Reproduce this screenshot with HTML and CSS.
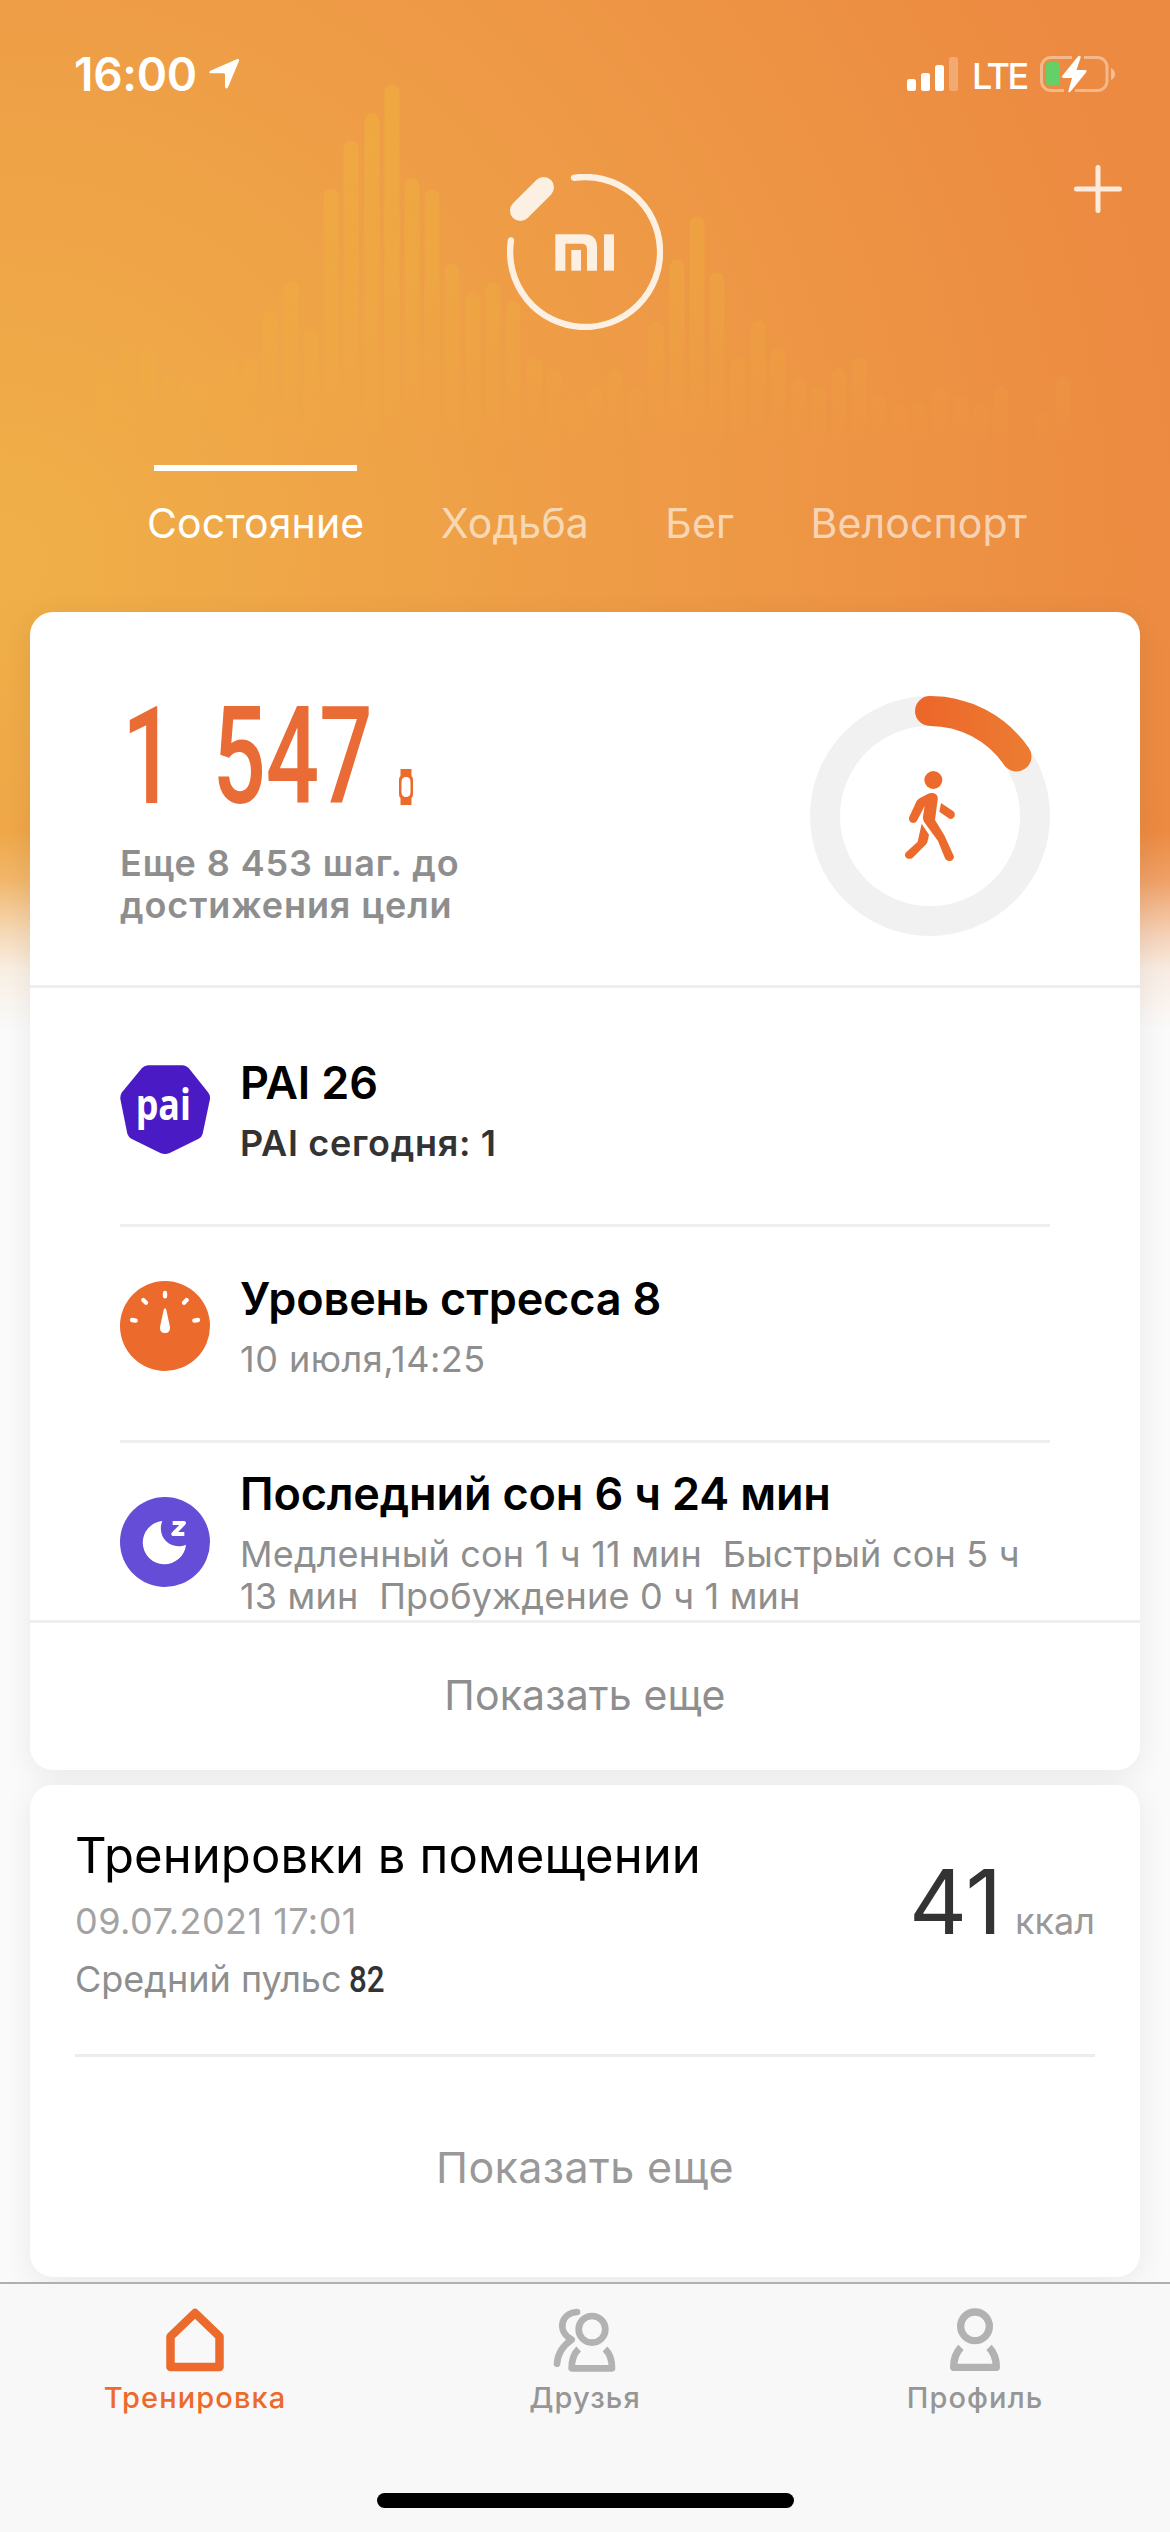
FILE: index.html
```html
<!DOCTYPE html>
<html lang="ru">
<head>
  <meta charset="UTF-8">
  <meta name="viewport" content="width=device-width, initial-scale=1.0">
  <title>Mi Fit</title>
  <link rel="stylesheet" href="styles.css">
</head>
<body>
  <div class="app">
    <header class="header">
      <svg class="wave" viewBox="0 0 1170 460">
        <defs>
          <linearGradient id="waveFill" gradientUnits="userSpaceOnUse" x1="0" y1="80" x2="0" y2="450">
            <stop offset="0" stop-color="#f0b43c" stop-opacity="0.5"/>
            <stop offset="0.5" stop-color="#f0b43c" stop-opacity="0.32"/>
            <stop offset="1" stop-color="#f0b43c" stop-opacity="0"/>
          </linearGradient>
        </defs>
        <path stroke="url(#waveFill)" d="M108 375V440M128 356V440M148 356V440M169 385V440M189 385V440M209 387V440M230 365V440M250 365V440M270 318V440M291 289V440M311 337V440M331 196V440M351 148V440M372 121V440M392 92V440M412 186V440M432 197V440M452 271V440M473 300V440M493 290V440M513 309V440M534 365V440M554 376V440M575 403V440M595 393V440M615 376V440M636 393V440M656 330V440M677 267V440M697 224V440M717 280V440M738 365V440M758 328V440M778 356V440M799 385V440M819 394V440M839 376V440M859 365V440M879 403V440M900 411V440M919 411V440M940 394V440M961 403V440M981 411V440M1001 394V440M1042 421V440M1063 384V440"/>
      </svg>

      <div class="status">
        <div class="status-left">
          <span class="time">16:00</span>
          <svg class="arrow" width="32" height="32" viewBox="0 0 96 96"><path d="M7 38 88 3q7-1 5 6L60 88q-5 7-9 0V49q0-3-4-3H8q-8-2-1-8z"/></svg>
        </div>
        <div class="status-right">
          <svg width="52" height="36" viewBox="0 0 52 36">
            <g fill="#fff">
              <rect x="0" y="23" width="9" height="12" rx="2.5"/>
              <rect x="14" y="17" width="9" height="18" rx="2.5"/>
              <rect x="28" y="9" width="9" height="26" rx="2.5"/>
              <rect x="42" y="1" width="9" height="34" rx="2.5" opacity="0.25"/>
            </g>
          </svg>
          <span class="lte">LTE</span>
          <svg width="76" height="38" viewBox="0 0 76 38">
            <path class="bat" d="M32 2.500H11a9.500 9.500 0 0 0-9.500 9.500v14a9.500 9.500 0 0 0 9.500 9.500H24M44 2.500H57.500a9.500 9.500 0 0 1 9.500 9.500v14a9.500 9.500 0 0 1-9.500 9.500H35"/>
            <path fill="#fff" opacity="0.45" d="M71 13q4 2 4 6t-4 6z"/>
            <rect x="6" y="7" width="14" height="24" rx="4" fill="#65cf68"/>
            <path fill="#fff" d="M38 1.500q3-2 2.500 1.500L36.500 15h8.500q2.500 0 1 2.500L31 36q-3 3-2.500-.5L32 23h-8q-3 0-1.500-2.500z"/>
          </svg>
        </div>
      </div>

      <div class="hero">
        <svg class="logo" viewBox="0 0 468 468">
          <g fill="none" stroke="#fcf0e2" stroke-linecap="round">
            <path stroke-width="19" d="M201 11.500A225 225 0 1 1 12 199"/>
            <path stroke-width="62" d="M110 40 40 110"/>
          </g>
          <g fill="#fcf0e2">
            <path d="M145 181h86q39 0 39 39v70h-30v-65q0-16-16-16h-49v81h-30z"/>
            <rect x="193" y="228" width="29" height="62"/>
            <rect x="291" y="181" width="30" height="109"/>
          </g>
        </svg>
        <svg class="plus" viewBox="0 0 48 48"><path d="M24 2.500v43M2.500 24h43"/></svg>
      </div>

      <nav class="tabs">
        <a class="tab active">Состояние</a>
        <a class="tab">Ходьба</a>
        <a class="tab">Бег</a>
        <a class="tab">Велоспорт</a>
      </nav>
    </header>

    <main>
      <section class="card">
        <div class="steps">
          <div>
            <div class="count">
              <span class="number">1 547</span>
              <svg class="watch" width="14" height="36" viewBox="0 0 14 36">
                <path fill="#ec6a2b" fill-rule="evenodd" d="M1.500 0h11v7q1.500 1 1.500 4v14q0 3-1.500 4v7h-11v-7Q0 28 0 25V11q0-3 1.500-4zM7 8Q2.500 8 2.500 13v10q0 5 4.500 5t4.500-5V13Q11.500 8 7 8z"/>
              </svg>
            </div>
            <p class="goal">Еще 8 453 шаг. до<br>достижения цели</p>
          </div>
          <svg class="ring" viewBox="0 0 240 240">
            <defs>
              <linearGradient id="ringFill">
                <stop offset="0" stop-color="#ec682a"/>
                <stop offset="1" stop-color="#ec7a31"/>
              </linearGradient>
            </defs>
            <circle cx="120" cy="120" r="105" fill="none" stroke="#f1f1f1" stroke-width="30"/>
            <path d="M120 15A105 105 0 0 1 206.500 60.500" fill="none" stroke="url(#ringFill)" stroke-width="30" stroke-linecap="round"/>
            <g fill="#ec6a2b" transform="translate(-30 -26) scale(0.33333)">
              <circle cx="460" cy="330" r="27"/>
              <path d="M455 369c12 0 20 8 18 20l-8 61 28 46 28 61c5 14-18 24-26 8l-21-52-42-58q-4-7-3-15l5-32-23 44c-9 14-29 4-23-12l22-47q3-5 10-9l23-12q5-3 12-3z"/>
              <path d="M483 399l37 25c12 11-2 29-14 21l-28-20z"/>
              <path d="M425 461l22 33-4 19q-1 6-6 11l-39 39c-12 10-29-3-21-15l36-33z"/>
            </g>
          </svg>
        </div>

        <div class="list">
          <div class="row">
            <svg class="icon" viewBox="0 0 270 270">
              <path fill="#4a1ac4" d="M85 1H188q10 0 18 8l58 73q7 9 6 20l-22 104q-2 9-12 15l-87 43q-14 6-28 0l-87-43q-9-6-12-15L1 102q-1-11 5-20L66 9q8-8 19-8z"/>
              <text class="pai" x="47" y="164" textLength="166" lengthAdjust="spacingAndGlyphs">pai</text>
            </svg>
            <div>
              <h2 class="row-title">PAI 26</h2>
              <p class="row-text dark">PAI сегодня: 1</p>
            </div>
          </div>
          <div class="row">
            <svg class="icon" viewBox="0 0 270 270">
              <circle cx="135" cy="135" r="135" fill="#ec6a2b"/>
              <g stroke="#fff" stroke-width="13" stroke-linecap="round">
                <path d="M135 36v10M70 57l8 8M200 57l-8 8M36 117l11 2M234 117l-11 2"/>
              </g>
              <path fill="#fff" d="M135 82q3 0 4 5l11 51q1 18-15 18t-15-18l11-51q1-5 4-5z"/>
            </svg>
            <div>
              <h2 class="row-title">Уровень стресса 8</h2>
              <p class="row-text wide">10 июля,14:25</p>
            </div>
          </div>
          <div class="row">
            <svg class="icon" viewBox="0 0 270 270">
              <circle cx="135" cy="135" r="135" fill="#664dd8"/>
              <path fill="#fff" d="M127 72A65 65 0 1 0 198 143C152 162 108 120 127 72z"/>
              <path fill="none" stroke="#fff" stroke-width="12" stroke-linejoin="round" d="M158 78h34l-32 33h33"/>
            </svg>
            <div>
              <h2 class="row-title">Последний сон 6 ч 24 мин</h2>
              <p class="row-text">Медленный сон 1 ч 11 мин&nbsp; Быстрый сон 5 ч<br>13 мин&nbsp; Пробуждение 0 ч 1 мин</p>
            </div>
          </div>
        </div>
        <a class="more">Показать еще</a>
      </section>

      <section class="card">
        <div class="workout">
          <div>
            <h2 class="workout-title">Тренировки в помещении</h2>
            <p class="date">09.07.2021 17:01</p>
            <p class="pulse">Средний пульс<b>82</b></p>
          </div>
          <div class="kcal"><strong>41</strong><span>ккал</span></div>
        </div>
        <a class="more big">Показать еще</a>
      </section>
    </main>

    <footer class="tabbar">
      <nav class="nav">
        <a class="nav-item active">
          <svg width="58" height="64" viewBox="0 0 58 64"><path fill="none" stroke="#ec6a2b" stroke-width="8.500" stroke-linejoin="round" d="M29 5 4.500 28.500V59h49V28.500z"/></svg>
          <span>Тренировка</span>
        </a>
        <a class="nav-item">
          <svg width="64" height="64" viewBox="38 39 192 192">
            <g fill="none" stroke="#b2b2b2" stroke-width="20">
              <circle cx="155" cy="103" r="40"/>
              <path stroke-linejoin="round" d="M115 162C100 176 94 196 94 220H215C215 196 209 176 194 162"/>
              <path stroke-linecap="round" stroke-linejoin="round" d="M110 51C62 54 48 108 94 134C64 154 52 178 50 206"/>
            </g>
          </svg>
          <span>Друзья</span>
        </a>
        <a class="nav-item">
          <svg width="50" height="64" viewBox="1227 38 150 192">
            <g fill="none" stroke="#b2b2b2" stroke-width="22">
              <circle cx="1302" cy="93" r="43"/>
              <path stroke-linejoin="round" d="M1260 156C1244 172 1238 192 1238 216H1366C1366 192 1360 172 1344 156"/>
            </g>
          </svg>
          <span>Профиль</span>
        </a>
      </nav>
      <div class="home-bar"></div>
    </footer>
  </div>
</body>
</html>
```
FILE: styles.css
```css
* {
    box-sizing: border-box;
}
body {
    margin: 0;
    font-family: Inter, "Noto Sans", sans-serif;
    background: #fafafa;
}
h2, p {
    margin: 0;
    font-weight: 400;
}
svg {
    display: block;
    flex: none;
}
.app {
    width: 1170px;
    height: 2532px;
    overflow: hidden;
    background:
        linear-gradient(to bottom, rgba(250, 250, 250, 0) 830px, rgba(250, 250, 250, 0.2) 880px, rgba(250, 250, 250, 0.6) 930px, rgba(250, 250, 250, 0.87) 970px, #fafafa 1030px),
        radial-gradient(circle 1350px at 0 560px, #f0b048 0, #ee9a46 50%, #ec8a41 88%);
}

/* header */
.header {
    position: relative;
    height: 612px;
    color: #fff;
}
.wave {
    position: absolute;
    top: 0;
    left: 0;
    width: 1170px;
    height: 460px;
    fill: none;
    stroke-width: 15;
    stroke-linecap: round;
}
.status {
    position: relative;
    display: flex;
    justify-content: space-between;
    height: 148px;
    padding: 0 54px 0 74px;
}
.status-left, .status-right {
    display: flex;
    align-items: center;
}
.time {
    width: 134px;
    font-size: 46px;
    font-weight: 600;
    letter-spacing: -0.3px;
}
.arrow {
    fill: #fff;
}
.lte {
    width: 81px;
    padding: 4px 0 0 13px;
    font-size: 36px;
    font-weight: 500;
    letter-spacing: -2.5px;
}
.bat {
    fill: none;
    stroke: #fff;
    stroke-width: 3;
    opacity: 0.4;
}
.hero {
    position: relative;
    display: grid;
    grid-template-columns: 1fr 156px 1fr;
    height: 317px;
}
.logo {
    grid-column: 2;
    width: 156px;
    height: 156px;
    margin-top: 26px;
}
.plus {
    justify-self: end;
    width: 48px;
    height: 48px;
    margin: 17px 48px 0 0;
    stroke: #fcebdc;
    stroke-width: 5;
    stroke-linecap: round;
}
.tabs {
    position: relative;
    display: flex;
    justify-content: space-between;
    padding: 0 143px 0 147px;
}
.tab {
    display: flex;
    flex-direction: column;
    align-items: center;
    gap: 26px;
    font-size: 41px;
    line-height: 52px;
    letter-spacing: 0.15px;
    color: rgba(255, 255, 255, 0.62);
}
.tab::before {
    content: "";
    width: 203px;
    height: 6px;
    margin: 0 -100px;
}
.tab.active {
    color: #fff;
}
.tab.active::before {
    background: #fff;
}

/* cards */
.card {
    margin: 0 30px 15px;
    background: #fff;
    border-radius: 23px;
    box-shadow: 0 6px 30px rgba(0, 0, 0, 0.07);
}
.steps {
    display: flex;
    justify-content: space-between;
    height: 376px;
    padding: 75px 90px 0;
    border-bottom: 3px solid #eee;
}
.count {
    display: flex;
    align-items: flex-end;
}
.number {
    width: 277px;
    margin-left: 2px;
    font-family: Roboto, sans-serif;
    font-size: 136px;
    font-weight: 500;
    line-height: 140px;
    word-spacing: 20px;
    color: #e96b36;
    white-space: nowrap;
    transform: scaleX(0.69);
    transform-origin: 0 0;
}
.watch {
    margin-bottom: 22px;
}
.goal {
    margin-top: 15px;
    font-size: 36px;
    font-weight: 600;
    line-height: 42px;
    letter-spacing: 0.9px;
    color: #8e8e8e;
}
.ring {
    width: 240px;
    height: 240px;
    margin-top: 9px;
}
.list {
    height: 632px;
    padding: 23px 90px 0;
    overflow: hidden;
}
.row {
    display: flex;
    align-items: center;
    gap: 30px;
    height: 216px;
    padding-bottom: 15px;
    border-bottom: 3px solid #eee;
}
.icon {
    width: 90px;
    height: 90px;
}
.pai {
    font-family: "Open Sans", sans-serif;
    font-size: 130px;
    font-weight: 700;
    fill: #fff;
}
.row-title {
    margin: 0 0 12px;
    font-size: 45px;
    font-weight: 600;
    line-height: 54px;
    letter-spacing: -0.15px;
    white-space: nowrap;
}
.row-text {
    font-size: 36px;
    line-height: 42px;
    letter-spacing: 0.2px;
    color: #8e8e8e;
    white-space: nowrap;
}
.row-text.wide {
    letter-spacing: 0.5px;
}
.row-text.dark {
    font-weight: 600;
    letter-spacing: 0.7px;
    color: #333;
}
.more {
    display: flex;
    align-items: center;
    justify-content: center;
    height: 150px;
    padding-bottom: 3px;
    border-top: 3px solid #eee;
    font-size: 41px;
    letter-spacing: 0.15px;
    color: #8e8e8e;
}
.more.big {
    height: 220px;
    padding: 0;
    border: 0;
    font-size: 43px;
    letter-spacing: 0.4px;
    color: #999;
}

/* workout */
.workout {
    display: flex;
    justify-content: space-between;
    height: 272px;
    margin: 0 45px;
    padding-top: 42px;
    border-bottom: 3px solid #ececec;
}
.workout-title {
    font-size: 49px;
    line-height: 58px;
    letter-spacing: 0.1px;
}
.date, .pulse {
    margin-top: 14px;
    font-size: 36px;
    line-height: 44px;
    letter-spacing: 0.45px;
    color: #a3a3a3;
}
.pulse {
    letter-spacing: 0;
    color: #8e8e8e;
}
.pulse b {
    display: inline-block;
    margin-left: 7px;
    font-family: Roboto, sans-serif;
    font-weight: 500;
    color: #333;
    transform: scaleX(0.87);
    transform-origin: 0 0;
}
.kcal {
    display: flex;
    align-items: baseline;
    gap: 13px;
    height: 100px;
    margin-top: 25px;
    font-size: 36px;
    line-height: 100px;
    color: #999;
}
.kcal strong {
    font-size: 90px;
    font-weight: 400;
    color: #333;
}

/* bottom bar */
.tabbar {
    position: relative;
    height: 251px;
    margin-top: -10px;
    background: #f8f8f8;
    border-top: 2px solid #b0b0b0;
}
.nav {
    display: grid;
    grid-template-columns: repeat(3, 1fr);
    height: 209px;
    padding-top: 24px;
}
.nav-item {
    display: flex;
    flex-direction: column;
    align-items: center;
    gap: 9px;
    font-size: 29px;
    font-weight: 500;
    line-height: 34px;
    letter-spacing: 1.1px;
    color: #969696;
}
.nav-item.active {
    color: #ec6a2b;
}
.home-bar {
    width: 417px;
    height: 15px;
    margin: 0 auto;
    border-radius: 8px;
    background: #000;
}
```
